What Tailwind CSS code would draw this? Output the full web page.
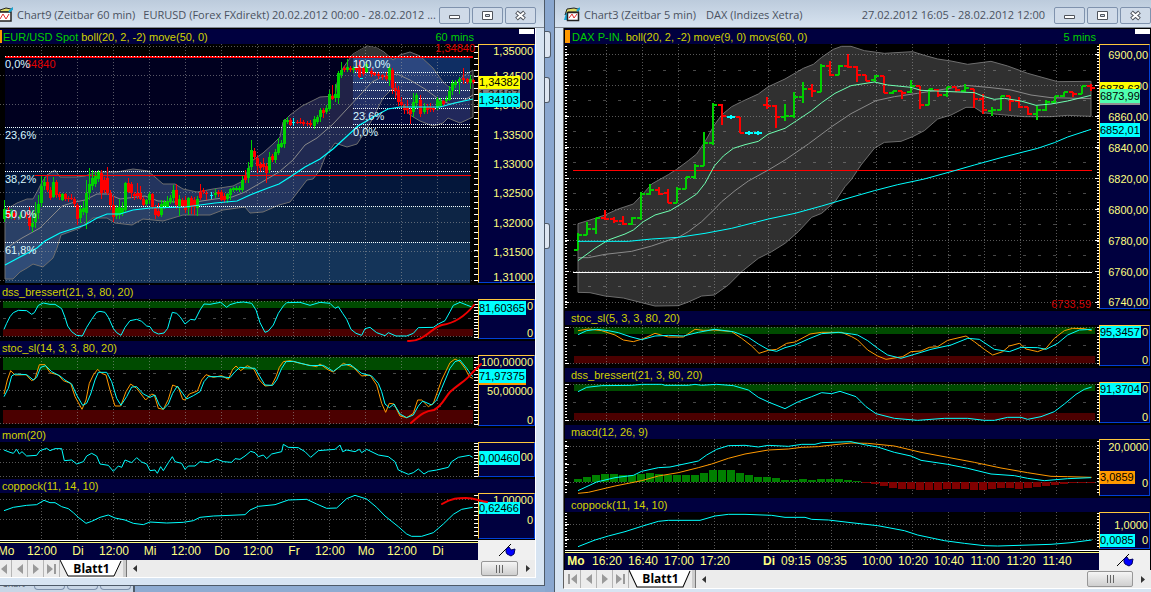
<!DOCTYPE html>
<html lang="de">
<head>
<meta charset="utf-8">
<title>Charts</title>
<script src="https://cdn.jsdelivr.net/npm/@tailwindcss/browser@4"></script>
</head>
<body class="flex h-screen overflow-hidden bg-[#8eabd1] font-['Liberation_Sans',sans-serif] text-[11px] leading-[14px]">

<!-- ============ EURUSD window ============ -->
<div class="flex min-w-0 flex-[545] flex-col">
<section class="flex flex-col border-r border-b border-[#4e5a68] bg-[#d7e4f2] pr-[8px] pb-[7px]">
  <header class="-mr-[8px] flex h-[28px] items-center gap-[2px] border-b border-[#808894] bg-linear-to-b from-[#bccbdc] to-[#d7e3f0] pt-[3px] pr-[8px] font-['Open_Sans','Noto_Sans',sans-serif] text-[11px] text-[#4a5260]">
    <svg class="mr-[2px] h-[16px] w-[13px] shrink-0" viewBox="3 0 13 16"><path d="M3 3 9 1l5 1 2-1-3 4H3z" fill="#dedc62" stroke="#222"/><path d="M2 5h12v9H2z" fill="#fff" stroke="#222" stroke-width="1.5"/><path d="m3 12 3-5 3 5 3-5" fill="none" stroke="#e23030"/><path d="m12 5 4-4" stroke="#18a8d8" stroke-width="2"/></svg>
    <h1 class="flex min-w-0 flex-1 gap-[8px] overflow-hidden whitespace-nowrap"><span>Chart9 (Zeitbar 60 min)</span><span>EURUSD (Forex FXdirekt) 20.02.2012 00:00 - 28.02.2012 ...</span></h1>
    <button aria-label="Minimieren" class="grid h-[17px] w-[31px] shrink-0 place-items-center rounded-[2px] border border-[#7f92ad] bg-[#cfdae8]"><svg class="h-[11px] w-[13px]" viewBox="0 0 13 11"><path d="M1.500 5.500h10v3h-10z" fill="#fff" stroke="#50545c"/></svg></button>
    <button aria-label="Maximieren" class="grid h-[17px] w-[31px] shrink-0 place-items-center rounded-[2px] border border-[#7f92ad] bg-[#cfdae8]"><svg class="h-[11px] w-[13px]" viewBox="0 0 13 11"><path d="M1.500 1.500h10v8h-10zM4.500 4.500h4v2h-4z" fill="#fff" fill-rule="evenodd" stroke="#50545c"/></svg></button>
    <button aria-label="Schließen" class="grid h-[17px] w-[31px] shrink-0 place-items-center rounded-[2px] border border-[#7f92ad] bg-[#cfdae8]"><svg class="h-[11px] w-[13px]" viewBox="0 0 13 11"><path d="m2.500 2 8 7m0-7-8 7" stroke="#50545c" stroke-width="4"/><path d="m3 2.500 7 6m0-6-7 6" stroke="#fff" stroke-width="2"/></svg></button>
  </header>

  <div class="relative flex flex-col border-r border-white bg-black pt-[1px]">
    <div class="flex h-[15px] items-center gap-[3px] bg-[#00003f] whitespace-nowrap text-[#d0d000]">
      <span class="-mr-[2px] h-[13px] w-[2px] bg-[#ff9900]"></span><span class="text-[#00d000]">EUR/USD Spot</span><span>boll(20, 2, -2) move(50, 0)</span>
      <span class="ml-auto text-[#00d000]">60 mins</span><span class="mr-[1px] ml-[42px] h-[5px] w-[15px] self-start bg-white"></span>
    </div>
    <div class="flex h-[241px]">
      <div class="relative min-w-0 flex-1">
        <svg class="h-full w-full" viewBox="0 44 478 241" preserveAspectRatio="none" fill="none">
          <g shape-rendering="crispEdges">
            <path fill="#00001f" d="M5 57h465v70H5z"/><path fill="#00092b" d="M5 127h465v44H5z"/><path fill="#04173b" d="M5 171h465v35H5z"/><path fill="#0d2545" d="M5 206h465v36H5z"/><path fill="#143459" d="M5 242h465v41H5z"/>
            <path fill="#0f2e63" d="M353 57h117v15H353z"/><path fill="#0c2558" d="M353 72h117v10H353z"/><path fill="#0a1d50" d="M353 82h117v8H353z"/><path fill="#071648" d="M353 90h117v8H353z"/><path fill="#041042" d="M353 98h117v10H353z"/><path fill="#020838" d="M353 108h117v17H353z"/>
          </g>
          <path fill="#b4bcff" fill-opacity=".18" d="M5 210 17 203 27 199 33 199 38 190 42 182 47 175 55 170 60 177 77 177 85 176 97 172 117 172 133 169 148 171 155 177 163 184 175 184 183 189 197 192 213 189 233 186 243 181 248 170 253 160 263 153 273 144 280 137 283 122 290 115 302 106 320 97 335 96 337 83 343 68 353 54 367 46 377 48 384 52 393 60 400 55 410 52 420 56 433 68 443 82 450 88 457 82 463 76 473 70 473 117 460 123 448 118 443 123 433 126 420 121 410 115 398 97 393 88 383 98 373 118 363 135 357 144 347 147 335 143 325 157 320 170 313 179 307 180 297 193 290 202 279 205 263 212 250 213 245 207 223 210 210 215 183 215 173 218 163 221 143 219 132 225 115 223 107 218 93 218 80 228 61 235 57 248 53 258 43 267 33 264 27 268 20 272 13 279 5 279z" stroke="#6e6e6e"/>
          <path fill="#333" d="M353 54 367 46 377 48 390 57H351z"/>
          <g data-grid="0 478 44 285" data-v="41 77 113 149 185 221 257 293 329 365 401 437" data-h="46 75 104 134 163 192 222 251 280"></g>
          <path stroke="#f00" shape-rendering="crispEdges" d="M5 56.500H473M5 57.500H473M35 175.500H471"/>
          <path stroke="#f5ffff" stroke-dasharray="1 1" shape-rendering="crispEdges" d="M5 127.500H470M5 171.500H470M5 206.500H470M5 242.500H470M353 72.500H470M353 82.500H470M353 90.500H470M353 98.500H470M353 108.500H470M353 124.500H470"/>
          <path stroke="#f5ffff" stroke-dasharray="1 2" shape-rendering="crispEdges" d="M5 56.500H470"/>
          <polyline stroke="#8a8a8a" points="5,249 22,238 40,228 52,216 62,206 75,202 85,200 97,194 108,194 120,199 145,196 158,201 175,202 195,202 215,199 232,197 245,192 262,182 279,172 293,160 305,145 317,138 333,124 347,109 360,95 372,82 382,77 397,74 410,80 425,89 440,100 450,104 463,101 473,95"/>
          <g id="candles" shape-rendering="crispEdges"></g>
          <polyline stroke="#0ff" stroke-width="1.2" points="5,265 20,257 37,248 45,241 60,233 85,225 97,218 107,214 120,214 133,210 150,208 185,207 215,203 237,201 250,195 268,188 279,184 290,177 305,167 320,159 333,149 345,138 358,126 375,116 388,109 400,107 440,107 455,103 473,99"/>
          <g data-ticks="474 478 46 283 6"></g>
        </svg>
        <span class="absolute top-[13px] left-[25px] text-[#e00000]">34840</span>
        <span class="absolute -top-[3px] right-[3px] text-[#e00000]">1,34840</span>
        <div class="text-[#d8f8ff]">
          <span class="absolute top-[13px] left-[5px]">0,0%</span><span class="absolute top-[84px] left-[5px]">23,6%</span><span class="absolute top-[128px] left-[5px]">38,2%</span><span class="absolute top-[163px] left-[5px]">50,0%</span><span class="absolute top-[199px] left-[5px]">61,8%</span>
          <span class="absolute top-[13px] left-[353px]">100,0%</span><span class="absolute top-[65px] left-[353px]">23,6%</span><span class="absolute top-[81px] left-[353px]">0,0%</span>
        </div>
      </div>
      <div class="relative mb-[2px] w-[57px] shrink-0 border border-t-[#ffc83c] border-r-[#0040d8] border-b-[#0040d8] border-l-[#ffc83c] bg-[#00003f] text-[#ffff80] *:absolute">
        <span class="top-[-1px] right-[1px]">1,35000</span><span class="top-[24px] right-[1px]">1,34500</span><span class="top-[53px] right-[1px]">1,34000</span><span class="top-[83px] right-[1px]">1,33500</span><span class="top-[112px] right-[1px]">1,33000</span><span class="top-[141px] right-[1px]">1,32500</span><span class="top-[171px] right-[1px]">1,32000</span><span class="top-[200px] right-[1px]">1,31500</span><span class="top-[225px] right-[1px]">1,31000</span>
        <span class="top-[42px] left-0 w-[41px] bg-[#808080] text-black">1,34187</span><span class="top-[31px] left-0 w-[41px] bg-[#ff0] pb-px leading-[12px] text-black">1,34382</span><span class="top-[48px] left-0 w-[41px] bg-[#0ff] text-black">1,34103</span>
      </div>
    </div>

    <div class="h-[14px] bg-[#00003f] pl-[2px] text-[#d0d000]">dss_bressert(21, 3, 80, 20)</div>
    <div class="flex h-[42px]">
      <svg class="h-full min-w-0 flex-1" viewBox="0 57 1434 126" preserveAspectRatio="none" fill="none">
        <path fill="#004b00" d="M9 64H1419V84H9z"/><path fill="#4b0000" d="M9 147H1419V169H9z"/>
        <g data-grid="0 1434 57 177" data-v="124 232 340 448 556 664 772 880 988 1096 1204 1312" data-h="64 169" data-d="115"></g>
        <polyline stroke="#0ff" vector-effect="non-scaling-stroke" points="12,148 20,130 30,110 40,98 55,91 80,92 95,103 103,98 115,76 130,69 150,73 165,73 185,86 195,112 203,138 215,155 230,166 247,168 260,142 275,118 290,97 300,94 315,97 325,112 340,145 350,158 363,166 375,142 390,122 410,118 425,124 440,138 450,140 460,155 475,162 492,159 503,145 510,120 517,97 530,100 540,110 555,132 572,118 585,120 600,90 612,72 630,73 645,70 662,67 680,82 690,74 710,68 730,66 755,70 768,90 780,128 795,157 805,153 820,135 835,100 850,78 860,68 900,67 930,76 960,67 990,70 1005,85 1015,80 1028,100 1040,118 1053,148 1068,160 1085,166 1095,146 1110,142 1130,158 1155,167 1165,158 1188,168 1220,168 1240,160 1255,143 1300,142 1315,132 1335,122 1350,95 1360,76 1380,67 1400,75 1418,82"/>
        <g data-ticks="1422 1434 64 172 9"></g>
      </svg>
      <div class="relative mb-[2px] w-[57px] shrink-0 border border-t-[#ffc83c] border-r-[#0040d8] border-b-[#0040d8] border-l-[#ffc83c] bg-[#00003f] text-[#ffff80] *:absolute"><span class="top-[-1px] right-[1px]">0</span><span class="top-[26px] right-[1px]">0</span><span class="top-[1px] left-0 w-[47px] bg-[#0ff] text-black">81,60365</span></div>
    </div>

    <div class="h-[14px] bg-[#00003f] pl-[2px] text-[#d0d000]">stoc_sl(14, 3, 3, 80, 20)</div>
    <div class="flex h-[73px]">
      <svg class="h-full min-w-0 flex-1" viewBox="0 225 1434 219" preserveAspectRatio="none" fill="none">
        <path fill="#004b00" d="M9 232H1419V270H9z"/><path fill="#4b0000" d="M9 390H1419V431H9z"/>
        <g data-grid="0 1434 225 438" data-v="124 232 340 448 556 664 772 880 988 1096 1204 1312" data-h="232 331 431" data-d="280 379"></g>
        <polyline stroke="#ff9900" vector-effect="non-scaling-stroke" points="12,342 22,300 32,272 45,285 78,284 95,302 105,296 118,254 135,254 150,278 175,285 190,302 212,310 225,350 246,388 258,360 268,310 280,285 293,268 305,280 318,285 330,330 345,378 362,378 378,335 392,312 410,325 437,360 455,342 463,345 475,385 490,388 505,358 518,315 535,322 548,358 555,360 568,342 592,333 605,300 618,284 640,292 665,287 685,298 698,268 708,258 722,272 742,257 762,268 778,300 795,318 815,316 828,290 838,262 850,245 870,242 900,250 950,260 960,252 985,270 1000,276 1030,250 1060,262 1085,288 1110,285 1130,315 1145,370 1157,397 1168,370 1182,372 1200,408 1220,413 1240,400 1253,360 1265,360 1285,380 1300,370 1325,300 1350,248 1365,237 1380,245 1395,265 1408,290 1418,295"/>
        <polyline stroke="#0ff" vector-effect="non-scaling-stroke" points="12,350 25,325 35,288 45,282 80,284 100,300 110,292 122,262 137,257 155,275 180,288 195,300 215,312 230,345 248,376 260,370 272,342 285,300 295,277 320,277 335,305 350,355 363,376 380,350 395,321 410,320 430,342 450,352 465,345 478,375 490,388 505,372 518,340 532,318 548,340 560,357 580,347 600,335 612,305 625,290 660,290 690,293 705,275 720,262 765,265 780,290 795,315 818,316 830,300 845,265 858,245 880,244 930,257 970,256 1000,274 1025,256 1050,253 1085,280 1115,288 1135,310 1145,335 1155,372 1168,383 1182,372 1200,402 1220,413 1240,405 1255,378 1268,363 1295,375 1310,360 1325,325 1350,265 1365,245 1380,240 1400,265 1418,290"/>
        <g data-ticks="1422 1434 232 435 10"></g>
      </svg>
      <div class="relative mb-[2px] w-[57px] shrink-0 border border-t-[#ffc83c] border-r-[#0040d8] border-b-[#0040d8] border-l-[#ffc83c] bg-[#00003f] text-[#ffff80] *:absolute"><span class="top-[-1px] right-[1px]">100,00000</span><span class="top-[28px] right-[1px]">50,00000</span><span class="top-[57px] right-[1px]">0</span><span class="top-[14px] left-0 h-[15px] w-[47px] bg-[#ff9900]"></span><span class="top-[13px] left-0 w-[47px] bg-[#0ff] text-black">71,97375</span></div>
    </div>

    <div class="h-[14px] bg-[#00003f] pl-[2px] text-[#d0d000]">mom(20)</div>
    <div class="flex h-[37px]">
      <svg class="h-full min-w-0 flex-1" viewBox="0 486 1434 111" preserveAspectRatio="none" fill="none">
        <g data-grid="0 1434 486 592" data-v="124 232 340 448 556 664 772 880 988 1096 1204 1312" data-h="508 547 589"></g>
        <polyline stroke="#0ff" vector-effect="non-scaling-stroke" points="12,510 30,517 40,520 50,508 58,522 66,515 80,528 110,526 120,512 140,505 150,512 165,506 185,506 193,542 215,540 230,552 250,545 260,528 275,520 290,528 300,552 325,556 340,574 355,558 365,562 375,540 395,548 410,533 425,546 440,552 450,572 465,570 472,580 482,560 490,572 505,548 517,530 525,545 545,550 555,568 565,558 585,558 600,545 625,548 650,537 670,545 695,547 705,536 720,538 735,528 752,514 765,518 775,530 790,525 800,536 815,522 845,515 850,493 865,502 895,503 915,515 932,532 955,512 1005,508 1020,495 1028,515 1040,510 1065,515 1078,508 1085,518 1100,508 1135,525 1165,530 1185,545 1195,570 1225,583 1240,578 1255,567 1272,582 1285,574 1310,570 1345,562 1355,545 1375,532 1408,526 1418,532"/>
        <g data-ticks="1422 1434 490 590 9"></g>
      </svg>
      <div class="relative mb-[2px] w-[57px] shrink-0 border border-t-[#ffc83c] border-r-[#0040d8] border-b-[#0040d8] border-l-[#ffc83c] bg-[#00003f] text-[#ffff80] *:absolute"><span class="top-[7px] right-[1px]">00</span><span class="top-[8px] left-0 w-[41px] bg-[#0ff] text-black">0,00460</span></div>
    </div>

    <div class="h-[14px] bg-[#00003f] pl-[2px] text-[#d0d000]">coppock(11, 14, 10)</div>
    <div class="flex h-[47px]">
      <svg class="h-full min-w-0 flex-1" viewBox="0 639 1434 141" preserveAspectRatio="none" fill="none">
        <g data-grid="0 1434 639 780" data-v="124 232 340 448 556 664 772 880 988 1096 1204 1312" data-h="658 718"></g>
        <polyline stroke="#0ff" vector-effect="non-scaling-stroke" points="12,692 40,682 80,676 110,674 132,661 150,668 165,668 185,680 205,686 220,698 235,712 258,730 275,724 300,712 325,705 345,714 375,720 400,730 430,734 450,726 500,729 550,727 580,722 600,712 640,708 690,706 735,704 750,690 775,679 825,674 865,660 920,658 950,672 980,685 1010,684 1040,656 1065,646 1100,657 1130,682 1155,708 1195,740 1220,762 1235,769 1265,769 1300,758 1330,732 1360,703 1385,688 1418,682"/>
        <g data-ticks="1422 1434 646 775 12"></g>
      </svg>
      <div class="relative mb-[1px] w-[57px] shrink-0 border border-t-[#ffc83c] border-r-[#0040d8] border-b-[#0040d8] border-l-[#ffc83c] bg-[#00003f] text-[#ffff80] *:absolute"><span class="top-[-1px] right-[1px]">1,00000</span><span class="top-[19px] right-[1px]">0</span><span class="top-[8px] left-0 h-[12px] w-[41px] bg-[#0ff] leading-[12px] text-black">0,62466</span></div>
    </div>

    <div class="flex h-[20px]">
      <div class="flex-1 overflow-hidden border-t border-white">
        <div class="mt-px flex h-[18px] border-t border-[#ffff80] bg-[#00003f] pt-px text-[12px] text-[#ffff80] *:w-[36px] *:shrink-0 *:text-center">
          <span class="-ml-[12px]">Mo</span><span>12:00</span><span>Di</span><span>12:00</span><span>Mi</span><span>12:00</span><span>Do</span><span>12:00</span><span>Fr</span><span>12:00</span><span>Mo</span><span>12:00</span><span>Di</span>
        </div>
      </div>
      <div class="grid w-[57px] place-items-center bg-[#f0f0f0]"><svg class="h-[14px] w-[18px]" viewBox="0 0 18 14"><path d="M1 13 13 1" stroke="#000"/><path d="m8 6 3-2 2 3 4-1-1 5-3 2-4-2-1-2z" fill="#00f" stroke="#000060"/></svg></div>
    </div>

    <!-- hand-drawn trend marks across the panes -->
    <svg class="pointer-events-none absolute inset-0 h-full w-full" viewBox="0 28 535 532" preserveAspectRatio="none" fill="none" stroke="#f00000" stroke-width="2" stroke-linecap="round">
      <path d="M408 341C424 342 432 327 442 325 456 323 466 315 474 305M411 423C422 413 426 411 434 410 442 406 444 399 450 392 460 383 466 381 472 373L481 364M442 504C452 498 458 498 466 498S480 501 487 502"/>
    </svg>
  </div>

  <div class="flex h-[18px] items-stretch border-r border-b border-white bg-[#ececec] font-['Open_Sans','Noto_Sans',sans-serif]">
    <div class="-ml-[4px] flex *:w-[16px] *:border-r *:border-[#b5b5b5] *:pl-[3px] *:text-[#9a9a9a]">
      <button aria-label="Erstes Blatt"><svg class="h-[12px] w-[10px]" viewBox="0 0 10 12"><path d="M8 1v10L2 6z" fill="currentColor"/></svg></button>
      <button aria-label="Vorheriges Blatt"><svg class="h-[12px] w-[10px]" viewBox="0 0 10 12"><path d="M8 1v10L2 6z" fill="currentColor"/></svg></button>
      <button aria-label="Nächstes Blatt"><svg class="h-[12px] w-[10px]" viewBox="0 0 10 12"><path d="M2 1v10l6-5z" fill="currentColor"/></svg></button>
      <button aria-label="Letztes Blatt"><svg class="h-[12px] w-[10px]" viewBox="0 0 10 12"><path d="M0 1v10l6-5zM7 1h2v10H7z" fill="currentColor"/></svg></button>
    </div>
    <button class="relative w-[63px] text-[12px] leading-[14px] font-bold text-black"><svg class="absolute inset-0 h-full w-full" viewBox="0 0 63 17" preserveAspectRatio="none"><path d="M1 0 8 16H54L61 1V0z" fill="#fff"/><path d="M0 0 8 16H54L61 1" fill="none" stroke="#000"/></svg><span class="relative">Blatt1</span></button>
    <span class="w-[4px] border-r border-[#777] bg-[#ccc]"></span>
    <button aria-label="Nach links" class="w-[16px] pl-[6px]"><svg class="h-[7px] w-[5px]" viewBox="0 0 5 7"><path d="M4 0v7L0 3.500z" fill="#333"/></svg></button>
    <span class="flex-1"></span>
    <button aria-label="Bildlauf" class="my-px grid w-[37px] place-items-center rounded-[2px] border border-[#979797] bg-linear-to-b from-[#f5f5f5] to-[#cfcfcf]"><svg class="h-[8px] w-[9px]" viewBox="0 0 9 8"><path d="M1.500 0v8M4.500 0v8M7.500 0v8" stroke="#666"/></svg></button>
    <button aria-label="Nach rechts" class="w-[17px] pl-[8px]"><svg class="h-[7px] w-[5px]" viewBox="0 0 5 7"><path d="M0 0v7l4-3.500z" fill="#333"/></svg></button>
  </div>
</section>
<!-- title bar edge of a window lying below -->
<div class="flex h-[8px] w-[135px] items-start gap-[2px] overflow-hidden border-r-2 border-[#4e5a68] bg-[#c8d6e6] pl-[2px]">
  <span class="-mt-[7px] h-[10px] w-[30px] overflow-hidden font-['Open_Sans'] text-[9px] leading-[10px] text-[#4a5260]">Chart</span><span class="h-[4px] w-[31px] rounded-b border border-t-0 border-[#7f92ad]"></span><span class="h-[4px] w-[31px] rounded-b border border-t-0 border-[#7f92ad]"></span><span class="h-[4px] w-[31px] rounded-b border border-t-0 border-[#7f92ad]"></span>
</div>
</div>

<!-- strip of desktop between the windows -->
<div class="flex w-[10px] shrink-0 flex-col border-r border-[#4e5a68] bg-[#8aa7cf] pt-[31px] *:rounded-r-[3px] *:border *:border-l-0 *:border-[#4e5a68] *:bg-[#dde6f1]">
  <span class="h-[27px] w-[6px]"></span><span class="mt-[19px] h-[26px] w-[5px]"></span><span class="mt-[120px] h-[26px] w-[5px]"></span>
</div>

<!-- ============ DAX window ============ -->
<section class="flex min-w-0 flex-[588] flex-col bg-[#d7e4f2] pl-[8px]">
  <header class="-ml-[8px] flex h-[28px] items-center gap-[2px] border-b border-[#808894] bg-linear-to-b from-[#bccbdc] to-[#d7e3f0] pt-[3px] pl-[9px] font-['Open_Sans','Noto_Sans',sans-serif] text-[11px] whitespace-nowrap text-[#4a5260]">
    <svg class="mr-[2px] h-[16px] w-[16px] shrink-0" viewBox="0 0 16 16"><path d="M1 8 3 2l7-1 4 1 1-1-1 4H4z" fill="#dedc62" stroke="#222"/><path d="M0 13 2 6h2v7z" fill="#1aa7d7"/><path d="M3.500 5.500h11v8h-11z" fill="#fff" stroke="#222" stroke-width="1.500"/><path d="m5 11 3-4 2 4 3-4" fill="none" stroke="#e23030"/><path d="m13 4 3-3" stroke="#18a8d8" stroke-width="2"/></svg>
    <h2 class="flex gap-[10px]"><span>Chart3 (Zeitbar 5 min)</span><span>DAX (Indizes Xetra)</span></h2>
    <span class="mr-[7px] ml-auto">27.02.2012 16:05 - 28.02.2012 12:00</span>
    <button aria-label="Minimieren" class="grid h-[17px] w-[31px] shrink-0 place-items-center rounded-[2px] border border-[#7f92ad] bg-[#cfdae8]"><svg class="h-[11px] w-[13px]" viewBox="0 0 13 11"><path d="M1.500 5.500h10v3h-10z" fill="#fff" stroke="#50545c"/></svg></button>
    <button aria-label="Maximieren" class="grid h-[17px] w-[31px] shrink-0 place-items-center rounded-[2px] border border-[#7f92ad] bg-[#cfdae8]"><svg class="h-[11px] w-[13px]" viewBox="0 0 13 11"><path d="M1.500 1.500h10v8h-10zM4.500 4.500h4v2h-4z" fill="#fff" fill-rule="evenodd" stroke="#50545c"/></svg></button>
    <button aria-label="Schließen" class="grid h-[17px] w-[31px] shrink-0 place-items-center rounded-[2px] border border-[#7f92ad] bg-[#cfdae8]"><svg class="h-[11px] w-[13px]" viewBox="0 0 13 11"><path d="m2.500 2 8 7m0-7-8 7" stroke="#50545c" stroke-width="4"/><path d="m3 2.500 7 6m0-6-7 6" stroke="#fff" stroke-width="2"/></svg></button>
  </header>

  <div class="flex flex-col border-l border-[#606060] bg-black pt-[1px] pr-[1px] pl-[1px]">
    <div class="flex h-[15px] items-center gap-[3px] bg-[#00003f] whitespace-nowrap text-[#d0d000]">
      <span class="-mr-[1px] h-[13px] w-[5px] bg-[#ff9900]"></span><span class="text-[#00d000]">DAX P-IN.</span><span>boll(20, 2, -2) move(9, 0) movs(60, 0)</span>
      <span class="ml-auto text-[#00d000]">5 mins</span><span class="ml-[36px] h-[5px] w-[15px] self-start bg-white"></span>
    </div>
    <div class="flex h-[267px]">
      <div class="relative min-w-0 flex-1">
        <svg class="h-full w-full" viewBox="30 132 1602 801" preserveAspectRatio="none" fill="none">
          <path fill="#303030" stroke="#6e6e6e" vector-effect="non-scaling-stroke" d="M69 671 105 660 150 645 190 627 235 612 270 575 290 552 340 524 365 508 400 482 425 462 450 425 478 375 500 345 530 320 560 305 610 282 640 260 690 237 745 205 775 193 800 172 835 148 860 139 888 139 928 152 988 160 1073 155 1108 166 1148 177 1188 183 1238 193 1308 184 1358 198 1418 220 1508 245 1608 244 1608 349 1538 346 1488 350 1408 350 1328 343 1283 338 1258 322 1233 322 1188 345 1148 357 1108 392 1073 410 1038 424 988 427 958 445 918 495 888 540 870 560 840 605 800 640 770 652 730 695 690 730 650 755 610 775 560 815 520 855 478 885 440 888 400 906 370 917 300 918 260 908 205 894 150 888 105 878 69 877z"/>
          <g data-grid="45 1632 132 931" data-v="154 262 370 478 640 721 829 964 1072 1180 1288 1396 1504" data-h="163 256 349 442 535 628 721 814 907" data-d="211 302 395 488 581 674 767 860"></g>
          <path stroke="red" vector-effect="non-scaling-stroke" shape-rendering="crispEdges" d="M54 511H1611"/><path stroke="#fff" vector-effect="non-scaling-stroke" shape-rendering="crispEdges" d="M54 817H1611"/>
          <polyline stroke="#8a8a8a" vector-effect="non-scaling-stroke" points="69,773 100,773 150,763 230,754 290,738 340,721 370,712 400,695 440,665 478,628 500,605 540,572 580,543 640,510 690,480 760,432 830,380 888,341 963,302 1018,290 1088,280 1178,266 1233,256 1308,263 1368,270 1428,285 1488,293 1608,296"/>
          <g id="bars" shape-rendering="crispEdges"></g>
          <polyline stroke="#6fffb0" vector-effect="non-scaling-stroke" points="69,782 120,745 160,720 210,702 235,690 265,665 300,645 345,632 385,608 425,582 450,550 478,498 505,468 535,445 570,434 610,424 640,402 690,385 725,362 770,332 800,308 840,280 888,257 958,246 998,255 1068,262 1098,271 1188,275 1258,278 1288,290 1318,298 1348,295 1398,303 1443,316 1488,312 1538,303 1608,286"/>
          <polyline stroke="#0ff" vector-effect="non-scaling-stroke" points="69,724 220,724 290,717 370,712 450,700 530,685 640,657 720,640 800,618 888,592 958,572 1028,554 1108,537 1188,515 1258,495 1338,473 1448,445 1498,428 1538,411 1608,388"/>
          <g data-ticks="30 36 140 931 9"></g><g data-ticks="1626 1632 140 931 9"></g>
          <g data-ticks="30 42 163 931 93"></g><g data-ticks="1620 1632 163 931 93"></g>
        </svg>
        <span class="absolute right-[8px] bottom-0 text-[#d00000]">6733,59</span>
      </div>
      <div class="relative mb-[2px] w-[51px] shrink-0 border border-t-[#ffc83c] border-r-[#0040d8] border-b-[#0040d8] border-l-[#ffc83c] bg-[#00003f] text-[#ffff80] *:absolute">
        <span class="top-[3px] right-[1px]">6900,00</span><span class="top-[34px] right-[1px]">6880,00</span><span class="top-[65px] right-[1px]">6860,00</span><span class="top-[96px] right-[1px]">6840,00</span><span class="top-[127px] right-[1px]">6820,00</span><span class="top-[158px] right-[1px]">6800,00</span><span class="top-[189px] right-[1px]">6780,00</span><span class="top-[220px] right-[1px]">6760,00</span><span class="top-[250px] right-[1px]">6740,00</span>
        <span class="top-[45px] left-0 h-[15px] w-[40px] bg-[#909090]"></span><span class="top-[37px] left-0 w-[40px] bg-[#ff0] text-black">6878,63</span><span class="top-[44px] left-0 w-[40px] bg-[#50ffb0] text-black">6873,99</span><span class="top-[78px] left-0 w-[40px] bg-[#0ff] text-black">6852,01</span>
      </div>
    </div>

    <div class="h-[14px] bg-[#00003f] pl-[6px] text-[#d0d000]">stoc_sl(5, 3, 3, 80, 20)</div>
    <div class="flex h-[43px]">
      <svg class="h-full min-w-0 flex-1" viewBox="30 75 1602 129" preserveAspectRatio="none" fill="none">
        <path fill="#004b00" d="M57 82H1620V102H57z"/><path fill="#4b0000" d="M57 168H1620V190H57z"/>
        <g data-grid="45 1632 75 198" data-v="154 262 370 478 640 721 829 964 1072 1180 1288 1396 1504" data-h="82 190" data-d="136"></g>
        <polyline stroke="#ff9900" vector-effect="non-scaling-stroke" points="69,92 100,87 140,92 180,105 205,120 235,125 265,116 300,100 340,111 385,111 420,88 445,91 478,90 530,95 560,115 590,138 612,160 640,151 665,148 695,130 720,126 765,102 800,97 860,97 890,110 908,120 938,150 968,168 993,178 1043,170 1068,155 1098,153 1123,142 1148,140 1178,121 1233,108 1258,125 1288,148 1313,165 1343,155 1363,138 1393,130 1413,147 1448,155 1473,145 1498,115 1528,92 1553,85 1588,86 1610,92"/>
        <polyline stroke="#0ff" vector-effect="non-scaling-stroke" points="69,104 95,92 125,88 160,92 190,98 225,110 260,119 300,108 340,106 385,108 430,97 478,88 535,95 580,112 610,132 640,149 665,154 690,143 720,135 760,117 800,101 850,97 890,102 908,105 938,122 968,145 998,165 1038,175 1078,163 1128,148 1188,135 1238,115 1273,118 1318,148 1363,155 1398,142 1448,143 1473,148 1508,130 1538,105 1573,90 1610,88"/>
        <g data-ticks="30 36 82 192 9"></g><g data-ticks="1626 1632 82 192 9"></g><g data-ticks="30 42 82 192 108"></g>
      </svg>
      <div class="relative mb-[2px] w-[51px] shrink-0 border border-t-[#ffc83c] border-r-[#0040d8] border-b-[#0040d8] border-l-[#ffc83c] bg-[#00003f] text-[#ffff80] *:absolute"><span class="top-[-1px] right-[1px]">0</span><span class="top-[27px] right-[1px]">0</span><span class="top-0 left-0 h-[12px] w-[41px] bg-[#0ff] leading-[12px] text-black">95,3457</span></div>
    </div>

    <div class="h-[14px] bg-[#00003f] pl-[6px] text-[#d0d000]">dss_bressert(21, 3, 80, 20)</div>
    <div class="flex h-[43px]">
      <svg class="h-full min-w-0 flex-1" viewBox="30 246 1602 129" preserveAspectRatio="none" fill="none">
        <path fill="#004b00" d="M57 253H1620V273H57z"/><path fill="#4b0000" d="M57 339H1620V361H57z"/>
        <g data-grid="45 1632 246 369" data-v="154 262 370 478 640 721 829 964 1072 1180 1288 1396 1504" data-h="253 361" data-d="307"></g>
        <polyline stroke="#0ff" vector-effect="non-scaling-stroke" points="69,275 95,262 140,257 230,256 260,253 320,253 330,256 400,256 420,253 440,256 485,253 535,257 580,270 610,292 640,306 690,326 730,305 770,290 800,278 830,281 855,274 903,290 933,320 963,341 1018,355 1088,361 1168,355 1238,355 1288,361 1318,361 1358,352 1398,352 1418,358 1458,350 1498,335 1528,312 1563,283 1588,268 1610,261"/>
        <g data-ticks="30 36 253 364 9"></g><g data-ticks="1626 1632 253 364 9"></g><g data-ticks="30 42 253 364 108"></g>
      </svg>
      <div class="relative mb-[2px] w-[51px] shrink-0 border border-t-[#ffc83c] border-r-[#0040d8] border-b-[#0040d8] border-l-[#ffc83c] bg-[#00003f] text-[#ffff80] *:absolute"><span class="top-[-1px] right-[1px]">0</span><span class="top-[27px] right-[1px]">0</span><span class="top-0 left-0 h-[12px] w-[41px] bg-[#0ff] leading-[12px] text-black">91,3704</span></div>
    </div>

    <div class="h-[14px] bg-[#00003f] pl-[6px] text-[#d0d000]">macd(12, 26, 9)</div>
    <div class="flex h-[59px]">
      <svg class="h-full min-w-0 flex-1" viewBox="30 417 1602 177" preserveAspectRatio="none" fill="none">
        <g data-grid="45 1632 417 588" data-v="154 262 370 478 640 721 829 964 1072 1180 1288 1396 1504" data-h="439 547" data-d="493"></g>
        <g id="histogram" shape-rendering="crispEdges"></g>
        <polyline stroke="#ff9900" vector-effect="non-scaling-stroke" points="69,580 100,577 180,558 260,542 310,528 370,518 430,503 470,492 520,475 570,462 640,450 700,447 740,442 790,440 840,434 888,429 938,430 1018,438 1098,457 1178,472 1258,487 1338,504 1418,518 1488,529 1538,530 1610,532"/>
        <polyline stroke="#0ff" vector-effect="non-scaling-stroke" points="69,572 125,546 180,533 235,526 260,514 310,503 345,501 430,483 455,465 485,448 520,437 570,436 610,441 640,436 700,439 740,433 780,433 800,428 888,425 928,434 968,441 1018,457 1068,468 1098,481 1178,493 1238,505 1308,522 1378,527 1418,535 1468,542 1538,536 1608,533"/>
        <g data-ticks="30 36 424 584 11"></g><g data-ticks="1626 1632 424 584 11"></g><g data-ticks="30 42 439 584 54"></g>
      </svg>
      <div class="relative mb-[2px] w-[51px] shrink-0 border border-t-[#ffc83c] border-r-[#0040d8] border-b-[#0040d8] border-l-[#ffc83c] bg-[#00003f] text-[#ffff80] *:absolute"><span class="top-[0px] right-[1px]">20,0000</span><span class="top-[36px] right-[1px]">0</span><span class="top-[31px] left-0 h-[13px] w-[35px] bg-[#ff9900] leading-[13px] text-black">3,0859</span></div>
    </div>

    <div class="h-[14px] bg-[#00003f] pl-[6px] text-[#d0d000]">coppock(11, 14, 10)</div>
    <div class="flex h-[38px]">
      <svg class="h-full min-w-0 flex-1" viewBox="30 636 1602 114" preserveAspectRatio="none" fill="none">
        <g data-grid="45 1632 636 750" data-v="154 262 370 478 640 721 829 964 1072 1180 1288 1396 1504" data-h="673 718"></g>
        <polyline stroke="#0ff" vector-effect="non-scaling-stroke" points="69,740 120,720 160,708 210,695 260,679 310,664 340,661 435,661 480,648 520,643 570,643 650,646 690,652 750,652 770,658 820,660 888,668 968,677 1048,692 1088,705 1168,722 1228,730 1288,737 1328,738 1488,733 1548,728 1610,720"/>
        <g data-ticks="30 36 640 747 9"></g><g data-ticks="1626 1632 640 747 9"></g><g data-ticks="30 42 673 747 45"></g>
      </svg>
      <div class="relative mb-[1px] w-[51px] shrink-0 border border-t-[#ffc83c] border-r-[#0040d8] border-b-[#0040d8] border-l-[#ffc83c] bg-[#00003f] text-[#ffff80] *:absolute"><span class="top-[5px] right-[1px]">1,0000</span><span class="top-[20px] right-[1px]">0</span><span class="top-[21px] left-0 h-[13px] w-[35px] bg-[#0ff] leading-[13px] text-black">0,0085</span></div>
    </div>

    <div class="flex h-[20px]">
      <div class="flex-1 overflow-hidden border-t border-white">
        <div class="mt-px flex h-[18px] border-t border-[#ffff80] bg-[#00003f] pt-px text-[12px] text-[#ffff80] *:w-[36px] *:shrink-0 *:text-center">
          <b class="-ml-[7px]">Mo</b><span class="-ml-[5px]">16:20</span><span>16:40</span><span>17:00</span><span>17:20</span><b class="ml-[18px]">Di</b><span class="-ml-[9px]">09:15</span><span>09:35</span><span class="ml-[9px]">10:00</span><span>10:20</span><span>10:40</span><span>11:00</span><span>11:20</span><span>11:40</span>
        </div>
      </div>
      <div class="grid w-[51px] place-items-center bg-[#f0f0f0]"><svg class="h-[14px] w-[18px]" viewBox="0 0 18 14"><path d="M1 13 13 1" stroke="#000"/><path d="m8 6 3-2 2 3 4-1-1 5-3 2-4-2-1-2z" fill="#00f" stroke="#000060"/></svg></div>
    </div>
  </div>

  <div class="flex h-[19px] items-stretch border-b border-l border-b-white border-l-[#606060] bg-[#ececec] pl-[1px] font-['Open_Sans','Noto_Sans',sans-serif]">
    <div class="flex *:w-[16px] *:border-r *:border-[#b5b5b5] *:pl-[3px] *:text-[#9a9a9a]">
      <button aria-label="Erstes Blatt"><svg class="h-[12px] w-[10px]" viewBox="0 0 10 12"><path d="M9 1v10L3 6zM0 1h2v10H0z" fill="currentColor"/></svg></button>
      <button aria-label="Vorheriges Blatt"><svg class="h-[12px] w-[10px]" viewBox="0 0 10 12"><path d="M8 1v10L2 6z" fill="currentColor"/></svg></button>
      <button aria-label="Nächstes Blatt"><svg class="h-[12px] w-[10px]" viewBox="0 0 10 12"><path d="M2 1v10l6-5z" fill="currentColor"/></svg></button>
      <button aria-label="Letztes Blatt"><svg class="h-[12px] w-[10px]" viewBox="0 0 10 12"><path d="M0 1v10l6-5zM7 1h2v10H7z" fill="currentColor"/></svg></button>
    </div>
    <button class="relative w-[63px] text-[12px] leading-[14px] font-bold text-black"><svg class="absolute inset-0 h-full w-full" viewBox="0 0 63 17" preserveAspectRatio="none"><path d="M1 0 8 16H54L61 1V0z" fill="#fff"/><path d="M0 0 8 16H54L61 1" fill="none" stroke="#000"/></svg><span class="relative">Blatt1</span></button>
    <span class="w-[4px] border-r border-[#777] bg-[#ccc]"></span>
    <button aria-label="Nach links" class="w-[16px] pl-[6px]"><svg class="h-[7px] w-[5px]" viewBox="0 0 5 7"><path d="M4 0v7L0 3.500z" fill="#333"/></svg></button>
    <span class="flex-1"></span>
    <button aria-label="Bildlauf" class="my-px grid w-[46px] place-items-center rounded-[2px] border border-[#979797] bg-linear-to-b from-[#f5f5f5] to-[#cfcfcf]"><svg class="h-[8px] w-[9px]" viewBox="0 0 9 8"><path d="M1.500 0v8M4.500 0v8M7.500 0v8" stroke="#666"/></svg></button>
    <button aria-label="Nach rechts" class="w-[18px] pl-[8px]"><svg class="h-[7px] w-[5px]" viewBox="0 0 5 7"><path d="M0 0v7l4-3.500z" fill="#333"/></svg></button>
  </div>
</section>

<script>
const path = (d, stroke, extra = '') => `<path d="${d}" stroke="${stroke}" vector-effect="non-scaling-stroke" ${extra}/>`;
const nums = s => (s || '').split(' ').filter(Boolean).map(Number);

document.querySelectorAll('[data-grid]').forEach(g => {
  const [x0, x1, y0, y1] = nums(g.dataset.grid);
  const v = nums(g.dataset.v).map(x => `M${x} ${y0}V${y1}`).join('');
  const h = nums(g.dataset.h).map(y => `M${x0} ${y}H${x1}`).join('');
  const d = nums(g.dataset.d).map(y => `M${x0 + 10} ${y}H${x1}`).join('');
  g.innerHTML = path(v + h, '#a0a0a0', 'stroke-opacity=".55" stroke-dasharray="1 2" shape-rendering="crispEdges"')
    + path(d, '#a0a0a0', 'stroke-opacity=".45" stroke-dasharray="3 12" shape-rendering="crispEdges"');
});
document.querySelectorAll('[data-ticks]').forEach(g => {
  const [x0, x1, y0, y1, step] = nums(g.dataset.ticks);
  let d = '';
  for (let y = y0; y <= y1; y += step) d += `M${x0} ${y}H${x1}`;
  g.innerHTML = path(d, '#fff', 'shape-rendering="crispEdges"');
});

const colours = { g: '#00d000', r: '#ff0000', c: '#00ffff' };

// colour, x, wick top, wick bottom, body top, body bottom
const candles = `g 4 200 222 209 219;r 8 207 219 211 217;g 11 209 219 212 216;r 14 210 220 213 217;g 20 212 219 215 217;r 26 212 219 214 216;r 29 207 230 217 226;g 32 210 232 223 227;g 35 202 228 213 222;g 38 195 219 204 213;g 41 176 207 186 203;g 44 177 190 182 186;r 47 176 192 182 190;r 50 187 200 190 198;g 53 177 198 182 197;r 56 180 198 182 195;r 59 192 200 194 197;g 62 193 201 194 200;r 65 193 201 194 199;r 68 196 202 198 199;r 71 194 200 198 199;r 74 197 207 199 204;r 77 203 225 205 219;g 80 205 223 209 218;g 83 201 215 208 212;g 86 180 229 193 213;g 89 168 200 184 193;g 92 170 190 178 186;g 95 172 187 176 184;g 98 170 182 172 179;r 101 170 199 173 193;r 104 177 193 180 190;r 107 167 195 178 193;r 110 190 210 193 205;r 113 196 222 205 217;g 116 205 219 208 216;g 119 199 219 207 215;g 122 202 216 208 213;g 125 182 212 183 210;r 128 178 193 183 192;r 131 182 198 184 193;r 134 192 200 194 196;r 137 183 199 193 196;r 140 186 200 193 199;r 143 197 206 199 205;g 146 199 206 200 204;g 149 192 204 194 200;r 152 193 209 194 207;r 155 205 219 208 215;r 158 203 217 211 216;g 161 200 217 204 215;g 164 200 209 202 206;g 167 196 208 201 207;g 170 195 204 198 202;g 173 185 203 190 198;r 176 184 209 190 205;g 179 195 216 199 206;r 182 198 208 200 206;r 185 196 213 200 210;g 188 197 215 198 208;r 191 196 214 198 207;r 194 197 215 200 207;g 197 196 216 199 208;r 200 184 200 192 198;r 203 188 194 190 192;r 206 191 200 193 194;c 211 192 199 195 196;g 215 189 198 193 195;r 218 190 197 192 194;r 221 190 201 192 200;r 224 193 203 196 200;g 227 193 203 194 199;g 230 188 200 189 195;g 233 187 192 188 190;g 236 186 191 188 190;g 239 186 192 188 190;g 242 176 192 180 190;r 245 170 183 175 180;g 248 162 183 168 178;g 251 140 170 150 167;r 254 148 160 151 157;r 257 155 173 158 166;r 260 162 172 164 168;r 263 158 170 164 167;r 266 163 183 166 173;g 269 152 173 157 170;r 272 154 162 156 160;g 275 149 163 152 160;g 278 138 155 144 153;g 281 140 148 143 147;g 284 119 148 120 144;g 287 117 124 120 122;r 290 118 126 120 125;c 293 118 126 122 123;r 297 120 124 122 123;r 300 118 124 122 123;r 303 120 126 122 124;r 307 121 126 123 124;r 310 120 127 123 125;g 314 116 129 119 126;g 317 115 124 117 122;g 320 108 122 110 117;r 323 108 118 110 113;g 326 105 114 108 112;g 329 90 111 94 109;r 332 85 100 96 99;g 335 84 102 94 98;g 338 71 104 73 98;g 341 62 78 70 75;r 344 66 72 68 70;g 347 59 72 67 70;r 350 66 72 68 70;g 353 66 73 68 70;r 356 62 72 68 70;r 359 60 78 65 77;c 361 78 79 78 79;r 363 66 76 68 74;g 366 61 73 64 72;r 371 68 77 71 74;r 374 72 76 73 75;r 378 72 79 74 76;r 382 74 80 75 77;r 386 72 81 76 79;g 389 66 86 68 80;r 392 68 94 70 88;r 395 83 98 88 91;r 398 86 106 90 102;r 401 97 108 102 105;r 404 104 114 106 110;r 407 100 114 108 110;r 410 108 124 110 114;g 413 93 117 102 112;g 416 93 108 95 103;r 420 95 117 100 114;g 424 103 114 107 112;r 427 104 114 107 110;r 430 103 112 107 109;r 433 106 112 108 110;g 437 97 110 99 108;g 440 98 107 101 106;r 443 100 106 101 104;g 446 96 102 99 101;g 449 86 101 91 100;g 452 80 95 83 91;g 455 80 88 82 85;g 459 77 94 79 82;r 463 68 84 78 80;r 467 78 84 79 82;g 470 75 89 79 83;r 473 79 84 80 82`;
document.getElementById('candles').innerHTML = candles.split(';').map(row => {
  const [c, ...n] = row.trim().split(' ');
  const [x, hi, lo, top, bottom] = n.map(Number);
  return `<path fill="${colours[c]}" d="M${x} ${hi}h1V${lo}h-1zM${x - 1} ${top}h3V${bottom}h-3z"/>`;
}).join('');

// colour, x, high, low, open, close
const bars = `g 69 700 750 750 704;g 96 667 705 704 687;g 123 653 703 687 653;r 150 630 660 653 656;r 177 650 670 656 662;r 204 648 676 662 671;g 231 652 676 673 655;g 258 577 660 655 583;g 285 552 585 583 571;r 312 562 584 571 581;r 339 568 610 579 609;g 366 560 609 609 566;g 393 530 566 566 530;g 420 492 537 530 497;g 447 397 497 497 429;g 474 310 436 429 314;r 501 312 374 314 348;c 528 345 356 350 350;r 555 350 400 350 399;c 582 393 404 399 399;c 609 393 404 399 399;r 636 292 328 315 318;r 663 316 383 318 350;g 690 313 362 350 349;g 717 277 355 349 292;g 744 247 308 292 267;r 771 252 292 267 273;g 798 193 275 275 198;r 825 184 227 198 225;g 852 196 225 225 198;r 879 163 203 198 201;r 906 198 247 201 224;r 933 224 244 224 244;g 960 226 247 240 227;r 987 227 279 227 279;g 1014 272 283 279 274;r 1041 272 298 274 278;g 1068 241 278 275 257;r 1095 257 328 258 315;g 1122 267 316 315 268;r 1149 268 290 270 285;g 1176 260 292 285 260;r 1203 260 275 260 270;g 1230 253 275 272 265;r 1257 267 325 268 296;r 1284 283 343 297 331;g 1311 320 348 332 331;g 1338 287 331 331 288;r 1365 288 332 288 302;r 1392 292 325 302 321;r 1419 320 346 321 342;g 1446 318 360 342 329;g 1473 300 332 329 306;g 1500 288 308 306 289;g 1527 275 290 289 276;r 1554 275 290 276 281;g 1581 257 282 281 258;r 1608 253 272 258 263`;
document.getElementById('bars').innerHTML = bars.split(';').map(row => {
  const [c, ...n] = row.trim().split(' ');
  const [x, hi, lo, open, close] = n.map(Number);
  return path(`M${x} ${hi}V${lo}M${x - 12} ${open}H${x}M${x} ${close}H${x + 13}`, colours[c], 'stroke-width="2"');
}).join('');

const zero = 546;
const levels = [537,531,525,522,522,526,526,522,519,522,525,525,525,525,519,510,510,510,519,525,531,531,534,540,540,537,540,537,537,537,540,543,549,551,557,563,567,567,569,569,569,567,567,567,569,569,567,563,563,567,563,561,557,555,552,549,549,548];
document.getElementById('histogram').innerHTML = levels.map((y, i) =>
  `<rect x="${57 + 27 * i}" y="${Math.min(y, zero)}" width="24" height="${Math.abs(y - zero)}" fill="${y < zero ? '#008000' : '#800000'}"/>`).join('');
</script>
</body>
</html>
